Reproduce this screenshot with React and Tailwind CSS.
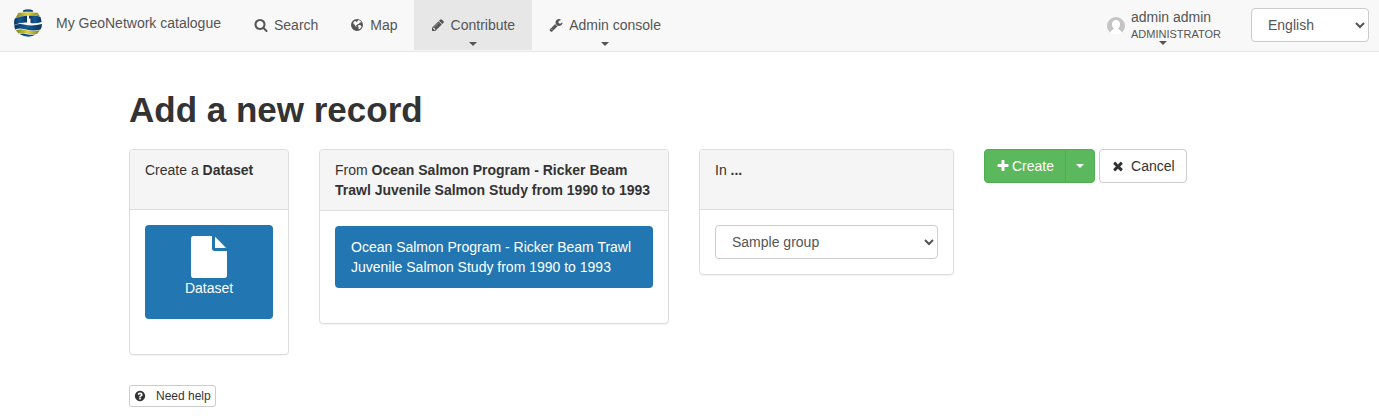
const PATHS = {
  search:
    "M1216 832q0-185-131.5-316.5t-316.5-131.5-316.5 131.5-131.5 316.5 131.5 316.5 316.5 131.5 316.5-131.5 131.5-316.5zm512 832q0 52-38 90t-90 38q-54 0-90-38l-343-342q-179 124-399 124-143 0-273.5-55.5t-225-150-150-225-55.5-273.5 55.5-273.5 150-225 225-150 273.5-55.5 273.5 55.5 225 150 150 225 55.5 273.5q0 220-124 399l343 343q37 37 37 90z",
  globe:
    "M896 128a768 768 0 1 0 0 1536a768 768 0 1 0 0-1536zM1060 270l180 60l150 110l90 120l-60 40l-90-50l-90 30l20 80l-80 20l-70 100l-110 0l-60 90l-130 20l-40 110l90 60l-60 50l-130-80l-70-170l-110-80l-90-160l110-150l130-90l120-20l-50 120l110 40l80-90l120-30l-20-60zM1150 900l180 10l90 110l60 20l-60 160l-140 160l-150 90l-50-130l20-130l-90-110l20-120z",
  pencil:
    "M491 1536l91-91-235-235-91 91v107h128v128h107zm523-928q0-22-22-22-10 0-17 7l-542 542q-7 7-7 17 0 22 22 22 10 0 17-7l542-542q7-7 7-17zm-54-192l416 416-832 832h-416v-416zm683 96q0 53-37 90l-166 166-416-416 166-165q36-38 90-38 53 0 91 38l235 234q37 39 37 91z",
  wrench:
    "M448 1472q0-26-19-45t-45-19-45 19-19 45 19 45 45 19 45-19 19-45zm644-420l-682 682q-37 37-90 37-52 0-91-37l-106-108q-38-36-38-90 0-53 38-91l681-681q39 98 114.5 173.5t173.5 114.5zm634-435q0 39-23 106-47 134-164.5 217.5t-258.5 83.5q-185 0-316.5-131.5t-131.5-316.5 131.5-316.5 316.5-131.5q58 0 121.5 16.5t107.5 46.5q16 11 16 28t-16 28l-293 169v224l193 107q5-3 79-48.5t135.5-81 70.5-35.5q15 0 23.5 10t8.5 25z",
  file:
    "M1152 512v-472q22 14 36 28l408 408q14 14 28 36h-472zm-128 32q0 40 28 68t68 28h544v1056q0 40-28 68t-68 28h-1344q-40 0-68-28t-28-68v-1600q0-40 28-68t68-28h800v544z",
  plus:
    "M1600 736v192q0 40-28 68t-68 28h-416v416q0 40-28 68t-68 28h-192q-40 0-68-28t-28-68v-416h-416q-40 0-68-28t-28-68v-192q0-40 28-68t68-28h416v-416q0-40 28-68t68-28h192q40 0 68 28t28 68v416h416q40 0 68 28t28 68z",
  times:
    "M1490 1322q0 40-28 68l-136 136q-28 28-68 28t-68-28l-294-294-294 294q-28 28-68 28t-68-28l-136-136q-28-28-28-68t28-68l294-294-294-294q-28-28-28-68t28-68l136-136q28-28 68-28t68 28l294 294 294-294q28-28 68-28t68 28l136 136q28 28 28 68t-28 68l-294 294 294 294q28 28 28 68z",
  question:
    "M1024 1376v-192q0-14-9-23t-23-9h-192q-14 0-23 9t-9 23v192q0 14 9 23t23 9h192q14 0 23-9t9-23zm256-672q0-88-55.5-163t-138.5-116-170-41q-243 0-371 213-15 24 8 42l132 100q7 6 19 6 16 0 25-12 53-68 86-92 34-24 86-24 48 0 85.5 26t37.5 59q0 38-20 61t-68 45q-63 28-115.5 86.5t-52.5 125.5v36q0 14 9 23t23 9h192q14 0 23-9t9-23q0-19 21.5-49.5t54.5-49.5q32-18 49-28.5t46-35 44.5-48 28-60.5 12.5-81zm384 192q0 209-103 385.5t-279.5 279.5-385.5 103-385.5-103-279.5-279.5-103-385.5 103-385.5 279.5-279.5 385.5-103 385.5 103 279.5 279.5 103 385.5z",
};

function Icon({ name, className = "size-3.5" }) {
  return (
    <svg viewBox="0 0 1792 1792" fill="currentColor" fillRule="evenodd" aria-hidden="true" className={`${className} shrink-0`}>
      <path d={PATHS[name]} />
    </svg>
  );
}

function Caret({ className = "" }) {
  return (
    <svg viewBox="0 0 8 4" fill="currentColor" aria-hidden="true" className={`h-1 w-2 shrink-0 ${className}`}>
      <path d="M0 0h8L4 4z" />
    </svg>
  );
}

function Logo() {
  return (
    <svg viewBox="0 0 28 28" aria-hidden="true" className="size-7 shrink-0">
      <defs>
        <linearGradient id="gold" x1="0" x2="1">
          <stop offset="0" stopColor="#80851f" />
          <stop offset=".5" stopColor="#ddd23a" />
          <stop offset="1" stopColor="#80851f" />
        </linearGradient>
        <linearGradient id="navy" x1="0" x2="1">
          <stop offset="0" stopColor="#0a335c" />
          <stop offset=".45" stopColor="#125a94" />
          <stop offset="1" stopColor="#0a335c" />
        </linearGradient>
      </defs>
      <path d="M9 1.500Q14-1 19 1.500V2.800H9z" fill="url(#navy)" />
      <path d="M4.500 3.800Q14 2.800 23.500 3.800L26 7.500Q20 5.500 14 6.800Q7 6.500 1.500 9z" fill="url(#gold)" />
      <path d="M.8 9.500Q6 6.800 13 6.800V13.500Q6 13 .2 16Q-.2 12 .8 9.500z" fill="url(#navy)" />
      <path d="M15 6.800Q22 6 26.500 8L27.600 13Q22 15 16.500 14V9.500H15z" fill="url(#navy)" />
      <path d="M.2 16.500Q5 14.200 10 15.500Q18 17.500 28 15Q28 18.500 26.500 20.500Q19 22.500 11 20.200Q5 18.600 1 20.500z" fill="url(#navy)" />
      <path d="M1.800 21.300Q7 19.300 12 21Q19 23 26 21.300L23 25Q16 25.500 11 24.300Q7 23.500 4.500 24.500z" fill="url(#gold)" />
      <path d="M5.500 25Q9 24 13 25.200Q17 26.200 22 25.600Q14 30 5.500 25z" fill="url(#navy)" />
    </svg>
  );
}

function Avatar() {
  return (
    <svg viewBox="0 0 18 18" aria-hidden="true" className="size-[18px] shrink-0">
      <circle cx="9" cy="9" r="9" fill="#c4c4c4" />
      <path d="M9 3C6.500 3 5 4.800 5 7.200C5 9 5.700 10.500 6.800 11.400C6.700 12.600 4.500 12.800 2.700 15.400A9 9 0 0 0 15.300 15.400C13.500 12.800 11.300 12.600 11.200 11.400C12.300 10.500 13 9 13 7.200C13 4.800 11.500 3 9 3z" fill="#fff" />
    </svg>
  );
}

function NavItem({ icon, label, menu, active }) {
  return (
    <a
      href="#"
      className={`flex flex-col items-center pt-[15px] ${menu ? "px-[17px]" : "px-4"} ${active ? "bg-[#e7e7e7]" : ""}`}
    >
      <span className="flex items-center gap-1.5">
        <Icon name={icon} />
        {label}
      </span>
      {menu && <Caret className="mt-[7px]" />}
    </a>
  );
}

function Panel({ title, children, bodyClass = "" }) {
  return (
    <section className="rounded border border-[#ddd] bg-white shadow-[0_1px_1px_rgba(0,0,0,0.05)]">
      <div className="min-h-[60px] rounded-t-[3px] border-b border-[#ddd] bg-[#f5f5f5] px-[15px] py-2.5">
        {title}
      </div>
      <div className={`p-[15px] ${bodyClass}`}>{children}</div>
    </section>
  );
}

const selectClass = "h-[34px] rounded border border-[#ccc] bg-white px-3 text-sm text-[#555]";

export default function App() {
  return (
    <div className="min-h-screen bg-white font-['Liberation_Sans',Arial,sans-serif] text-sm/5 text-[#333]">
      <header className="flex h-13 items-stretch justify-between border-b border-[#e7e7e7] bg-[#f8f8f8] pr-2.5 pl-3.5 text-[#555]">
        <nav className="flex pb-px">
          <a href="#" className="mr-[17px] flex items-center gap-3.5 pb-1">
            <Logo />
            My GeoNetwork catalogue
          </a>
          <NavItem icon="search" label="Search" />
          <NavItem icon="globe" label="Map" />
          <NavItem icon="pencil" label="Contribute" menu active />
          <NavItem icon="wrench" label="Admin console" menu />
        </nav>
        <div className="flex gap-[30px]">
          <a href="#" className="flex items-center gap-1.5">
            <Avatar />
            <span className="flex flex-col">
              <span className="leading-5">admin admin</span>
              <span className="text-[11px]/3.5">ADMINISTRATOR</span>
              <Caret className="mr-auto ml-7" />
            </span>
          </a>
          <select aria-label="Language" defaultValue="English" className={`${selectClass} mt-2 w-[118px]`}>
            <option>English</option>
            <option>Français</option>
          </select>
        </div>
      </header>

      <main className="pr-[11px]">
        <div className="mx-auto max-w-[1140px] pt-[38px]">
          <h1 className="px-[15px] text-[35px]/10 font-bold">Add a new record</h1>
          <div className="mt-[19px] grid grid-cols-12 items-start">
            <div className="col-span-2 px-[15px]">
              <Panel title={<>Create a <b>Dataset</b></>} bodyClass="pb-[35px]">
                <button type="button" className="flex h-[94px] w-full flex-col items-center rounded bg-[#2277b3] pt-[11px] text-white">
                  <Icon name="file" className="size-[42px]" />
                  Dataset
                </button>
              </Panel>
            </div>
            <div className="col-span-4 px-[15px]">
              <Panel
                title={<>From <b>Ocean Salmon Program - Ricker Beam Trawl Juvenile Salmon Study from 1990 to 1993</b></>}
                bodyClass="pb-[35px]"
              >
                <button type="button" className="w-full rounded bg-[#2277b3] px-4 py-[11px] text-left text-white">
                  Ocean Salmon Program - Ricker Beam Trawl Juvenile Salmon Study from 1990 to 1993
                </button>
              </Panel>
            </div>
            <div className="col-span-3 px-[15px]">
              <Panel title={<>In <b>...</b></>}>
                <select aria-label="Group" defaultValue="Sample group" className={`${selectClass} w-full`}>
                  <option>Sample group</option>
                </select>
              </Panel>
            </div>
            <div className="col-span-3 flex gap-1 px-[15px]">
              <div className="flex h-[34px] text-white">
                <button type="button" className="flex items-center gap-0.5 rounded-l border border-[#4cae4c] bg-[#5cb85c] px-[11px]">
                  <Icon name="plus" />
                  Create
                </button>
                <button type="button" aria-label="More create options" className="-ml-px rounded-r border border-[#4cae4c] bg-[#5cb85c] px-2.5">
                  <Caret />
                </button>
              </div>
              <button type="button" className="flex h-[34px] items-center gap-1.5 rounded border border-[#ccc] bg-white px-[11px]">
                <Icon name="times" />
                Cancel
              </button>
            </div>
          </div>
          <div className="mt-[30px] px-[15px]">
            <button type="button" className="flex h-[22px] items-center gap-2.5 rounded-[3px] border border-[#ccc] bg-white px-1 text-xs">
              <Icon name="question" className="size-3" />
              Need help
            </button>
          </div>
        </div>
      </main>
    </div>
  );
}
